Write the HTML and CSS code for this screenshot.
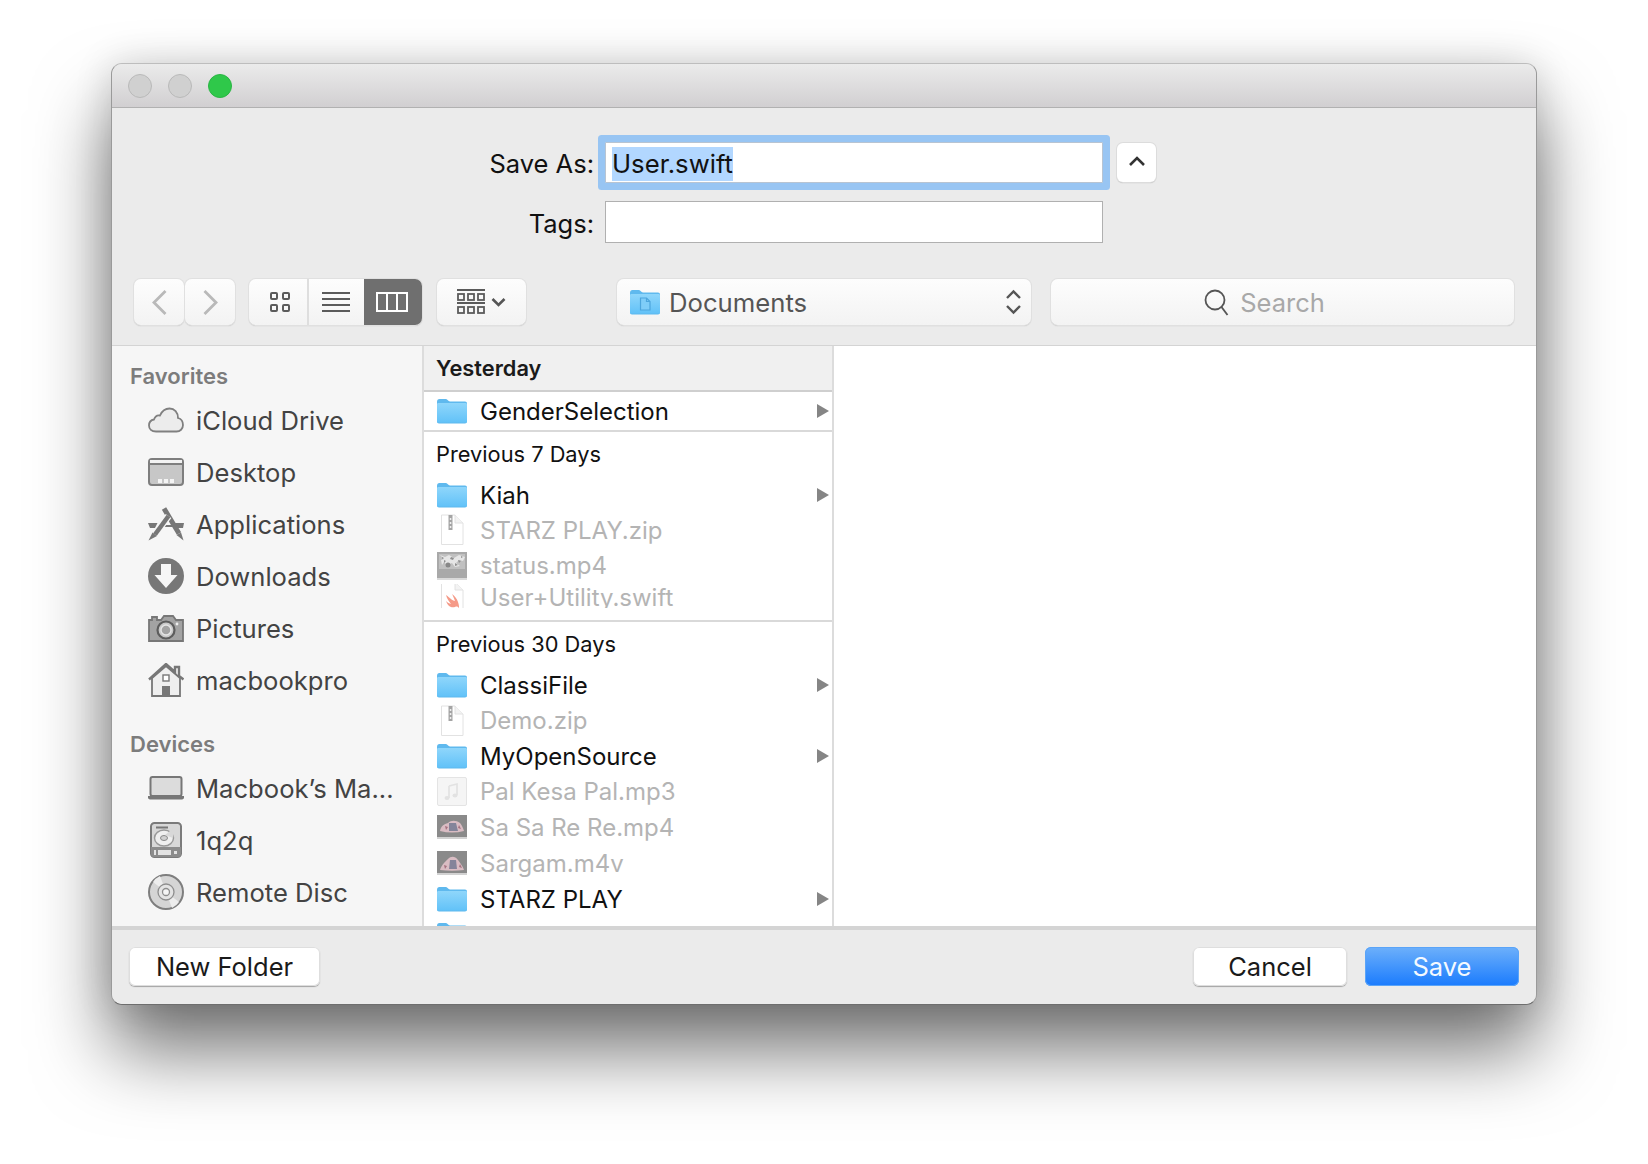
FILE: index.html
```html
<!DOCTYPE html>
<html lang="en">
<head>
<meta charset="utf-8">
<title>Save</title>
<link rel="stylesheet" href="styles.css">
</head>
<body>
<svg class="defs" width="0" height="0" aria-hidden="true">
  <defs>
    <linearGradient id="fold" x1="0" y1="0" x2="0" y2="1"><stop offset="0" stop-color="#8fd6fb"/><stop offset="1" stop-color="#62c2f8"/></linearGradient>
    <symbol id="folder" viewBox="0 0 30 26">
      <path d="M0 4C0 2 .8 1 2.500 1H9c1.600 0 2 2.500 4 2.500h15c1.300 0 2 .8 2 2V23.500c0 1.300-.7 2-2 2H2c-1.300 0-2-.7-2-2Z" fill="#5fb9ee"/>
      <path d="M0 6.500C0 5.500.6 5 1.500 5h27c.9 0 1.500.5 1.500 1.500V23c0 1-.6 1.500-1.500 1.500h-27C.6 24.500 0 24 0 23Z" fill="url(#fold)"/>
    </symbol>
    <symbol id="doc" viewBox="0 0 24 32">
      <path d="M1.500 1H15l8 8v21.500H1.500Z" fill="#fff" stroke="#e2e2e2"/>
      <path d="M15 1v8h8" fill="#f3f3f3" stroke="#e2e2e2"/>
    </symbol>
    <symbol id="tri" viewBox="0 0 12 14"><path d="M0 0l12 7L0 14Z" fill="#858585"/></symbol>
  </defs>
</svg>
<main class="window">
  <header class="titlebar">
    <span class="light"></span><span class="light"></span><span class="light light-green"></span>
  </header>

  <section class="form">
    <label class="form-label">Save As:</label>
    <div class="field field-focus"><span class="selected">User.swift</span></div>
    <button class="collapse" aria-label="Collapse">
      <svg width="18" height="12" viewBox="0 0 18 12"><path d="M2 10l7-7 7 7" fill="none" stroke="#333" stroke-width="2.600"/></svg>
    </button>
    <label class="form-label">Tags:</label>
    <div class="field"></div>
  </section>

  <nav class="toolbar">
    <div class="nav-pair">
      <button class="tool nav-btn" aria-label="Back"><svg width="17" height="27" viewBox="0 0 17 27"><path d="M14.500 2L3 13.500 14.500 25" fill="none" stroke="#b9b9b9" stroke-width="2.800"/></svg></button>
      <button class="tool nav-btn" aria-label="Forward"><svg width="17" height="27" viewBox="0 0 17 27"><path d="M2.500 2L14 13.500 2.500 25" fill="none" stroke="#b9b9b9" stroke-width="2.800"/></svg></button>
    </div>
    <div class="tool segments">
      <div class="seg seg-a"><svg width="22" height="22" viewBox="0 0 22 22" fill="none" stroke="#5b5b5b" stroke-width="2"><rect x="2" y="2" width="6" height="6" rx="1"/><rect x="14" y="2" width="6" height="6" rx="1"/><rect x="2" y="14" width="6" height="6" rx="1"/><rect x="14" y="14" width="6" height="6" rx="1"/></svg></div>
      <div class="seg seg-b"><svg width="30" height="22" viewBox="0 0 30 22" stroke="#5b5b5b" stroke-width="2"><path d="M1 2h28M1 8h28M1 14h28M1 20h28"/></svg></div>
      <div class="seg seg-c"><svg width="32" height="20" viewBox="0 0 32 20" fill="none" stroke="#fff" stroke-width="2"><rect x="1" y="1" width="30" height="18"/><path d="M11 1v18M21 1v18"/></svg></div>
    </div>
    <button class="tool group-btn" aria-label="Arrange">
      <svg width="28" height="27" viewBox="0 0 28 27" fill="none" stroke="#5b5b5b" stroke-width="1.800"><path d="M0 1h28M0 14h28"/><rect x="1" y="5" width="6" height="6"/><rect x="11" y="5" width="6" height="6"/><rect x="21" y="5" width="6" height="6"/><rect x="1" y="18" width="6" height="6"/><rect x="11" y="18" width="6" height="6"/><rect x="21" y="18" width="6" height="6"/></svg>
      <svg width="15" height="10" viewBox="0 0 15 10"><path d="M1.500 2l6 6 6-6" fill="none" stroke="#555" stroke-width="2.600"/></svg>
    </button>
    <button class="tool popup">
      <svg width="30" height="26" viewBox="0 0 30 26"><use href="#folder"/><path d="M10.500 9h6l3.500 3.500V21h-9.500Z" fill="#7fcdf8" stroke="#4da6dd" stroke-width="1.200"/><path d="M16.500 9v3.500H20" fill="none" stroke="#4da6dd" stroke-width="1.200"/></svg>
      <span class="popup-text">Documents</span>
      <svg class="updown" width="17" height="26" viewBox="0 0 17 26" fill="none" stroke="#555" stroke-width="2.400"><path d="M2 9l6.500-6.500L15 9M2 17l6.500 6.500L15 17"/></svg>
    </button>
    <div class="tool search">
      <svg width="26" height="27" viewBox="0 0 26 27" fill="none" stroke="#555" stroke-width="1.800"><circle cx="11" cy="11" r="9.500"/><path d="M17.500 18l6 8"/></svg>
      <span class="search-text">Search</span>
    </div>
  </nav>

  <section class="browser">
    <aside class="sidebar">
      <h2 class="side-head">Favorites</h2>
      <div class="side-item">
        <svg width="36" height="26" viewBox="0 0 36 26"><path d="M8 24.500C3.500 24.500 1 22 1 18.500c0-3 2-5.500 5-6 1-3 3.500-4.500 6-4C14 4 17.500 1.500 21.500 1.500c5 0 8.500 4 8.500 9.500 3 .8 5 3.500 5 7 0 4-3 6.500-6.500 6.500Z" fill="#ececec" stroke="#808080" stroke-width="1.800"/></svg>
        <span>iCloud Drive</span>
      </div>
      <div class="side-item">
        <svg width="36" height="28" viewBox="0 0 36 28"><rect x="1" y="1" width="34" height="26" rx="3" fill="#c7c7c7" stroke="#7e7e7e" stroke-width="2"/><path d="M2 2h32v3H2Z" fill="#f2f2f2"/><path d="M1 6h34" stroke="#7e7e7e" stroke-width="2"/><path d="M10 21h4v4h-4ZM16 21h4v4h-4ZM22 21h4v4h-4Z" fill="#f4f4f4"/></svg>
        <span>Desktop</span>
      </div>
      <div class="side-item">
        <svg width="36" height="34" viewBox="0 0 36 34"><path d="M0 16h9.500l-2.500 5H2ZM26.500 16H36l-1 5h-6ZM11 18h15v2H11Z" fill="#777"/><path d="M16 1.500l15 25" fill="none" stroke="#777" stroke-width="5"/><path d="M28.500 28l4.500-2.500 2.500 8Z" fill="#777"/><path d="M20.500 9L7 27.500" fill="none" stroke="#f6f6f6" stroke-width="7"/><path d="M20.500 9L7 27.500" fill="none" stroke="#777" stroke-width="4.500"/><path d="M4.500 25.500l4.500 3.500-8.500 4.500Z" fill="#777"/></svg>
        <span>Applications</span>
      </div>
      <div class="side-item">
        <svg width="36" height="36" viewBox="0 0 36 36"><circle cx="18" cy="18" r="18" fill="#777"/><path d="M13 6h10v11h6.500L18 30 6.500 17H13Z" fill="#f6f6f6"/></svg>
        <span>Downloads</span>
      </div>
      <div class="side-item">
        <svg width="36" height="27" viewBox="0 0 36 27"><path d="M1 5h3V2h5v3h4l3-4h9l3 4h7v21H1Z" fill="#a3a3a3" stroke="#777" stroke-width="1.800"/><circle cx="18" cy="15" r="8.500" fill="#c9c9c9" stroke="#5d5d5d" stroke-width="2.200"/><circle cx="18" cy="15" r="5" fill="#a3a3a3" stroke="#e6e6e6" stroke-width="1.400"/><circle cx="29" cy="9" r="1.400" fill="#eee"/></svg>
        <span>Pictures</span>
      </div>
      <div class="side-item">
        <svg width="36" height="34" viewBox="0 0 36 34"><path d="M4 15v18h28V15L18 3Z" fill="#efefef" stroke="#777" stroke-width="1.800"/><path d="M1 16.500L18 1l9 8V4h4v9l4.500 3.500" fill="none" stroke="#777" stroke-width="2.400"/><rect x="15" y="12" width="6" height="6" fill="#fff" stroke="#777" stroke-width="1.400"/><rect x="14" y="23" width="8" height="10" fill="#777"/></svg>
        <span>macbookpro</span>
      </div>
      <h2 class="side-head side-head-2">Devices</h2>
      <div class="side-item">
        <svg width="36" height="24" viewBox="0 0 36 24"><rect x="2.500" y="1" width="31" height="19" rx="2" fill="#dcdcdc" stroke="#777" stroke-width="2"/><path d="M0 20h36v1.500c0 1-1 2-2 2H2c-1 0-2-1-2-2Z" fill="#777"/></svg>
        <span>Macbook’s Ma...</span>
      </div>
      <div class="side-item">
        <svg width="36" height="36" viewBox="0 0 36 36"><rect x="3" y="1" width="30" height="34" rx="3.500" fill="#d8d8d8" stroke="#7b7b7b" stroke-width="2"/><path d="M3 25h30v7c0 2-1 3-3 3H6c-2 0-3-1-3-3Z" fill="#8c8c8c"/><path d="M8 5.500h12" stroke="#777" stroke-width="2"/><ellipse cx="16" cy="16" rx="9.500" ry="8" fill="#efefef" stroke="#999" stroke-width="1.400"/><ellipse cx="16" cy="16" rx="3.500" ry="2.500" fill="#d0d0d0" stroke="#888"/><path d="M17 13L27 5l-2 11Z" fill="#d8d8d8"/><path d="M10 28h13v5H10ZM6 28h2v5H6ZM26 29h3v3h-3Z" fill="#e3e3e3"/></svg>
        <span>1q2q</span>
      </div>
      <div class="side-item">
        <svg width="36" height="36" viewBox="0 0 36 36"><circle cx="18" cy="18" r="17" fill="#d5d5d5" stroke="#7e7e7e" stroke-width="2"/><path d="M18 18L5 8a17 17 0 0 1 7-6ZM18 18l13 10a17 17 0 0 1-7 6Z" fill="#ededed"/><circle cx="18" cy="18" r="8" fill="#e4e4e4" stroke="#8e8e8e" stroke-width="1.300"/><circle cx="18" cy="18" r="3.500" fill="#f5f5f5" stroke="#8e8e8e" stroke-width="1.300"/></svg>
        <span>Remote Disc</span>
      </div>
    </aside>

    <div class="column">
      <h3 class="col-head">Yesterday</h3>
      <div class="row h38"><svg class="ico" width="30" height="26"><use href="#folder"/></svg><span class="name">GenderSelection</span><svg class="tri" width="12" height="14"><use href="#tri"/></svg></div>
      <h3 class="group-head g47 ruled">Previous 7 Days</h3>
      <div class="row h36"><svg class="ico" width="30" height="26"><use href="#folder"/></svg><span class="name">Kiah</span><svg class="tri" width="12" height="14"><use href="#tri"/></svg></div>
      <div class="row h34 dim"><svg class="ico" width="30" height="32" viewBox="0 0 30 32"><use href="#doc" x="3" width="24" height="32"/><path d="M11.500 1h4v15h-4Z" fill="#a4a4a4"/><path d="M12.800 4h1.500v2h-1.500ZM12.800 8h1.500v2h-1.500ZM12.800 12h1.500v2h-1.500Z" fill="#eee"/></svg><span class="name">STARZ PLAY.zip</span></div>
      <div class="row h37 dim"><svg class="ico" width="30" height="29" viewBox="0 0 30 29"><rect y="1" width="30" height="26" fill="#a9a9a9"/><path d="M2 3h26v15H2Z" fill="#c0c0c0"/><path d="M3 4l5 2 4-2 5 3 5-3 6 2-2 4-4-1-3 3 4 3-5 1-3-4-5 2-3-3-2 3-1-5 3-1Z" fill="#e6e6e6"/><path d="M14 6l3 1-1 2-3-1ZM21 9l3 1-2 2ZM7 9l2 1-2 2ZM18 12l3 2-3 1ZM5 6l2 1-2 1ZM24 5l2 1-2 1Z" fill="#8f8f8f"/><circle cx="11" cy="14" r="2.500" fill="#878787"/><rect y="27" width="30" height="2" fill="#dadada"/></svg><span class="name">status.mp4</span></div>
      <div class="row h24 clip dim"><svg class="ico" width="30" height="32" viewBox="0 0 30 32"><use href="#doc" x="3" width="24" height="32"/><path d="M9 14c4 3 7 6 9 6-1-3-2-5-3-7 3 2 5 5 6 8 1 3 1 4 1 6-1-1-2-2-4-1-3 1-7 0-9-6 2 2 3 2 5 3-2-3-4-5-5-9Z" fill="#f59a88"/></svg><span class="name">User+Utility.swift</span></div>
      <h3 class="group-head g47 ruled top12">Previous 30 Days</h3>
      <div class="row h36"><svg class="ico" width="30" height="26"><use href="#folder"/></svg><span class="name">ClassiFile</span><svg class="tri" width="12" height="14"><use href="#tri"/></svg></div>
      <div class="row h35 dim"><svg class="ico" width="30" height="32" viewBox="0 0 30 32"><use href="#doc" x="3" width="24" height="32"/><path d="M11.500 1h4v15h-4Z" fill="#a4a4a4"/><path d="M12.800 4h1.500v2h-1.500ZM12.800 8h1.500v2h-1.500ZM12.800 12h1.500v2h-1.500Z" fill="#eee"/></svg><span class="name">Demo.zip</span></div>
      <div class="row h36"><svg class="ico" width="30" height="26"><use href="#folder"/></svg><span class="name">MyOpenSource</span><svg class="tri" width="12" height="14"><use href="#tri"/></svg></div>
      <div class="row h35 dim"><svg class="ico" width="30" height="30" viewBox="0 0 30 30"><rect x=".5" y=".5" width="29" height="28" rx="1.500" fill="#f5f5f5" stroke="#e4e4e4"/><path d="M12 9l8-2v11M12 9v12" fill="none" stroke="#e2e2e2" stroke-width="1.600"/><ellipse cx="10" cy="21" rx="2.500" ry="2" fill="#e2e2e2"/><ellipse cx="18" cy="18.500" rx="2.500" ry="2" fill="#e2e2e2"/></svg><span class="name">Pal Kesa Pal.mp3</span></div>
      <div class="row h36 dim"><svg class="ico" width="30" height="26" viewBox="0 0 30 26"><rect y="1" width="30" height="22" fill="#8a8a8a"/><path d="M3 17c1-5 4-7 8-8 3-3 8-3 12 0 2 2 3 5 4 8-8 2-16 2-24 0Z" fill="#d9bcc3"/><path d="M12 9h7l2 8h-9Z" fill="#84849a"/><path d="M8 12l3 1-2 3ZM22 11l2 4-3-1Z" fill="#a5717f"/><rect y="23" width="30" height="2" fill="#d2d2d2"/></svg><span class="name">Sa Sa Re Re.mp4</span></div>
      <div class="row h36 dim"><svg class="ico" width="30" height="26" viewBox="0 0 30 26"><rect y="1" width="30" height="22" fill="#8a8a8a"/><path d="M3 20c2-6 5-8 8-11 3-3 7-3 10 1 2 3 5 6 6 10-8 1-16 1-24 0Z" fill="#d9bcc3"/><path d="M13 10h6l1 9h-8Z" fill="#84849a"/><path d="M7 15l3 1-2 3ZM23 14l2 4-3-1Z" fill="#a5717f"/><rect y="23" width="30" height="2" fill="#d2d2d2"/></svg><span class="name">Sargam.m4v</span></div>
      <div class="row h36"><svg class="ico" width="30" height="26"><use href="#folder"/></svg><span class="name">STARZ PLAY</span><svg class="tri" width="12" height="14"><use href="#tri"/></svg></div>
      <div class="row h36"><svg class="ico" width="30" height="26"><use href="#folder"/></svg><span class="name">wallet</span></div>
    </div>

    <div class="preview"></div>
  </section>

  <footer class="footer">
    <button class="btn">New Folder</button>
    <span class="spacer"></span>
    <button class="btn btn-cancel">Cancel</button>
    <button class="btn btn-primary">Save</button>
  </footer>
</main>
</body>
</html>
```

FILE: styles.css
```css
* { box-sizing: border-box; }
html, body { margin: 0; height: 100%; }
body {
  background: #fff;
  padding: 63px 0 0 111px;
  font-family: Inter, "Liberation Sans", sans-serif;
  color: #111;
  overflow: hidden;
}
.defs { position: absolute; }
button { font: inherit; color: inherit; padding: 0; margin: 0; }

.window {
  width: 1426px;
  height: 942px;
  display: flex;
  flex-direction: column;
  background: #ebebeb;
  border: 1px solid #9a9a9a;
  border-top-color: #bdbdbd;
  border-bottom-color: #6e6e6e;
  border-radius: 11px;
  overflow: hidden;
  box-shadow: 0 46px 76px rgba(0, 0, 0, .55), 0 0 38px rgba(0, 0, 0, .14);
}

.titlebar {
  flex: none;
  height: 44px;
  display: flex;
  align-items: center;
  gap: 16px;
  padding-left: 16px;
  background: linear-gradient(#ebebeb, #d1cfd1);
  border-bottom: 1px solid #b1b1b1;
}
.light {
  width: 24px;
  height: 24px;
  border-radius: 50%;
  background: #d0d0d0;
  border: 1px solid #b9b9b9;
}
.light-green { background: #2fc84a; border-color: #2ab544; }

.form {
  flex: none;
  height: 171px;
  display: grid;
  grid-template-columns: 482px 498px 39px;
  grid-template-rows: 41px 42px;
  column-gap: 11px;
  row-gap: 18px;
  padding-top: 34px;
  align-items: center;
}
.form-label {
  justify-self: end;
  padding-top: 2px;
  font-size: 25.500px;
  color: #111;
}
.field {
  height: 42px;
  background: #fff;
  border: 1px solid #b0b0b0;
  display: flex;
  align-items: center;
  padding-left: 6px;
  font-size: 25.700px;
}
.field-focus {
  height: 41px;
  padding-top: 2px;
  border-color: #b8c4d2;
  box-shadow: 0 0 0 7px #98c5f3;
  border-radius: 1px;
}
.selected {
  background: #b2d7ff;
  line-height: 34px;
  color: #111;
}
.collapse {
  margin-left: 3px;
  width: 39px;
  height: 39px;
  background: #fff;
  border: 0;
  border-radius: 6px;
  box-shadow: 0 0 0 1px #dcdcdc, 0 1px 1px #9e9e9e;
  display: flex;
  align-items: center;
  justify-content: center;
  padding-bottom: 4px;
}

.toolbar {
  flex: none;
  height: 66px;
  display: flex;
  align-items: flex-start;
  padding-left: 22px;
}
.tool {
  height: 46px;
  background: linear-gradient(#fdfdfd, #f3f3f3);
  border: 0;
  border-radius: 7px;
  box-shadow: 0 0 0 1px #e0e0e0, 0 1px 1px #a8a8a8;
  display: flex;
  align-items: center;
  justify-content: center;
}
.nav-pair { display: flex; gap: 1px; }
.nav-btn { width: 50px; }
.segments {
  margin-left: 14px;
  width: 173px;
  overflow: hidden;
  justify-content: flex-start;
}
.seg { height: 100%; display: flex; align-items: center; justify-content: center; }
.seg-a { width: 60px; padding-left: 3px; border-right: 2px solid #dedede; }
.seg-b { width: 55px; padding-right: 1px; }
.seg-c { width: 58px; padding-right: 3px; background: #6f6f6f; }
.group-btn { margin-left: 15px; width: 89px; gap: 6px; }
.popup {
  margin-left: 91px;
  width: 414px;
  justify-content: flex-start;
  padding-left: 13px;
  font-size: 25.700px;
  color: #555;
}
.popup-text { margin-left: 9px; flex: 1; text-align: left; }
.updown { margin-right: 9px; }
.search {
  margin-left: 20px;
  width: 463px;
  gap: 10px;
  padding-right: 36px;
  font-size: 25.500px;
  color: #a8a8a8;
}

.browser {
  flex: none;
  height: 585px;
  display: flex;
  background: #fff;
  border-top: 1px solid #d4d4d4;
  border-bottom: 4px solid #d4d4d4;
}
.sidebar {
  flex: none;
  width: 312px;
  background: #f6f6f6;
  border-right: 2px solid #dcdcdc;
  padding: 15px 0 0 18px;
  overflow: hidden;
}
.side-head {
  margin: 0 0 3px;
  height: 30px;
  font-size: 22px;
  font-weight: 600;
  line-height: 30px;
  color: #7c7c7c;
}
.side-head-2 { margin: 23px 0 3px; }
.side-item {
  height: 52px;
  display: flex;
  align-items: center;
  padding-left: 18px;
  font-size: 25.600px;
  color: #434343;
  white-space: nowrap;
}
.side-item svg { flex: none; margin-right: 12px; }

.column {
  flex: none;
  width: 410px;
  border-right: 2px solid #dcdcdc;
  overflow: hidden;
}
.col-head {
  margin: 0;
  height: 46px;
  padding-left: 12px;
  background: #f0f0f0;
  border-bottom: 2px solid #cfcfcf;
  font-size: 21.800px;
  font-weight: 600;
  line-height: 44px;
  color: #1a1a1a;
}
.group-head {
  margin: 0;
  padding: 0 0 2px 12px;
  display: flex;
  align-items: center;
  font-size: 21.800px;
  font-weight: 400;
  color: #111;
}
.ruled { border-top: 2px solid #d9d9d9; }
.top12 { margin-top: 12px; }
.g47 { height: 47px; }
.row {
  display: flex;
  align-items: center;
  padding-left: 13px;
  font-size: 24px;
  color: #111;
  white-space: nowrap;
}
.h38 { height: 38px; }
.h37 { height: 37px; }
.h36 { height: 36px; }
.h35 { height: 35px; }
.h34 { height: 34px; }
.h24 { height: 24px; padding-top: 2px; }
.clip { overflow: hidden; }
.dim { color: #b4b4b4; }
.ico { flex: none; margin-right: 13px; overflow: visible; }
.name { flex: 1; }
.tri { flex: none; margin-right: 3px; }
.preview { flex: 1; }

.footer {
  flex: 1;
  min-height: 0;
  display: flex;
  align-items: flex-start;
  padding: 17px 17px 0;
  background: #ebebeb;
}
.spacer { flex: 1; }
.btn {
  height: 39px;
  width: 191px;
  background: #fff;
  border: 0;
  border-radius: 6px;
  box-shadow: inset 0 0 0 1px #dedede, 0 1px 1px #a4a4a4;
  font-size: 25.500px;
  color: #1a1a1a;
  text-align: center;
}
.btn-cancel { width: 154px; margin-right: 18px; }
.btn-primary {
  width: 154px;
  color: #f4f9ff;
  background: linear-gradient(#6db0fb, #1a7bfd);
  box-shadow: inset 0 0 0 1px #5aa4f8;
}
```
